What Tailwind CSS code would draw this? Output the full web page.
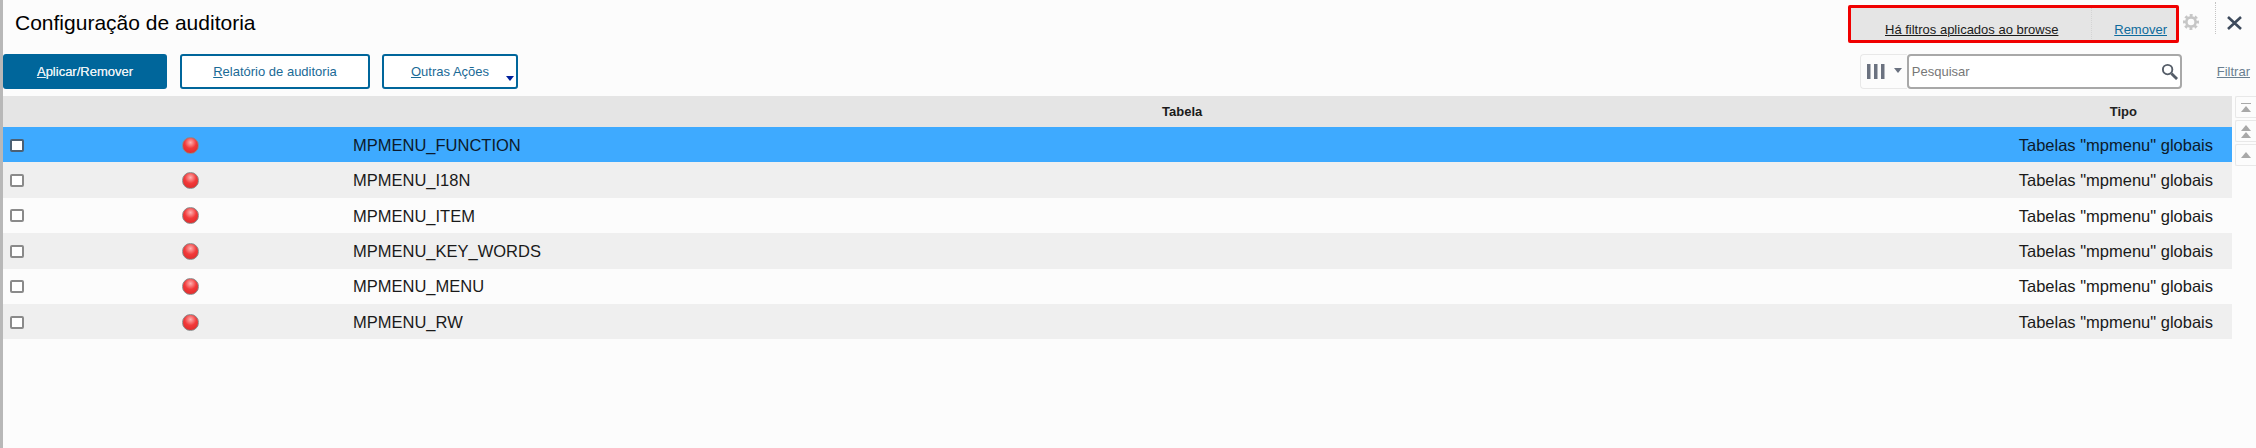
<!DOCTYPE html>
<html>
<head>
<meta charset="utf-8">
<script src="https://cdn.jsdelivr.net/npm/@tailwindcss/browser@4"></script>
</head>
<body class="m-0 overflow-hidden bg-[#fcfcfc]">
<div class="relative flex h-[448px] w-[2256px] font-['Liberation_Sans',Arial,sans-serif] text-[#1a1a1a]">
  <div class="w-[3px] shrink-0 bg-[#b8b8b8]"></div>
  <div class="flex min-w-0 flex-1 flex-col">
    <header class="flex h-[54px] items-start">
      <h1 class="ml-[12px] mt-[8px] text-[21px] leading-[30px] text-black">Configuração de auditoria</h1>
      <div class="ml-auto mt-[5px] flex h-[38px] w-[331px] items-end rounded-[2px] border-[3px] border-[#f00000] bg-[#e5e5e5] pb-[1px] text-[13px] leading-[18px]">
        <a class="ml-[34px] text-[#1a1a1a] underline">Há filtros aplicados ao browse</a>
        <span class="ml-[33px] h-full border-l border-dotted border-[#d4d4d4]"></span>
        <a class="ml-auto mr-[9px] text-[#0d6a9c] underline">Remover</a>
      </div>
      <div class="mt-[14px] flex w-[24px] justify-center">
        <svg width="16" height="16" viewBox="0 0 24 24" fill="none" stroke="#c6c6c6"><circle cx="12" cy="12" r="7" stroke-width="4"/><circle cx="12" cy="12" r="10" stroke-width="4" stroke-dasharray="4.3 3.55" stroke-dashoffset="2.15"/></svg>
      </div>
      <div class="ml-[12px] mt-[2px] h-[32px] border-l border-dotted border-[#c4c4c4]"></div>
      <div class="ml-[11px] mt-[16px] mr-[14px]">
        <svg width="15" height="14" viewBox="0 0 15 14" stroke="#3d4a5c" stroke-width="2.6" fill="none"><path d="M1 1l13 12M14 1L1 13"/></svg>
      </div>
    </header>
    <div class="flex h-[42px] items-start">
      <button class="flex h-[35px] w-[164px] items-center justify-center rounded-[3px] bg-[#00669b] text-[13px] text-[#e8f0f5] [text-shadow:0_0_0.5px_#e8f0f5]"><span><u>A</u>plicar/Remover</span></button>
      <button class="ml-[13px] flex h-[35px] w-[190px] items-center justify-center rounded-[3px] border-2 border-[#00669b] bg-white text-[13px] text-[#1a6a96]"><span><u>R</u>elatório de auditoria</span></button>
      <button class="relative ml-[12px] flex h-[35px] w-[136px] items-center justify-center rounded-[3px] border-2 border-[#00669b] bg-white text-[13px] text-[#1a6a96]"><span><u>O</u>utras Ações</span><span class="absolute bottom-[6px] right-[2px] h-0 w-0 border-x-[4px] border-t-[5px] border-x-transparent border-t-[#00209c]"></span></button>
      <div class="ml-auto flex">
        <div class="flex h-[35px] w-[47px] items-center rounded-l-[4px] border border-r-0 border-[#e8e8e8] pl-[6px]">
          <svg width="18" height="15" viewBox="0 0 18 15" fill="#6b7280"><rect x="0" y="0" width="3.5" height="15"/><rect x="7" y="0" width="3.5" height="15"/><rect x="14" y="0" width="3.5" height="15"/></svg>
          <span class="mb-[3px] ml-[9px] h-0 w-0 border-x-[4px] border-t-[5px] border-x-transparent border-t-[#6b7280]"></span>
        </div>
        <div class="flex h-[35px] w-[275px] items-center rounded-[4px] border-2 border-[#a8a8a8] bg-white pl-[3px] pr-[2px]">
          <span class="text-[13px] text-[#777]">Pesquisar</span>
          <svg class="ml-auto" width="17" height="17" viewBox="0 0 18 18" fill="none" stroke="#555d68"><circle cx="7" cy="7" r="5" stroke-width="2"/><path d="M11 11l6 6" stroke-width="3"/></svg>
        </div>
        <a class="ml-[35px] mr-[6px] self-center text-[13px] leading-[35px] text-[#6a7f90] underline">Filtrar</a>
      </div>
    </div>
    <div class="flex">
      <div class="min-w-0 flex-1">
        <div class="flex h-[31px] items-center bg-[#e5e5e5] text-[13px] font-bold">
          <span class="ml-[1159px]">Tabela</span>
          <span class="ml-auto mr-[95px] text-[#222]">Tipo</span>
        </div>
        <div class="flex h-[35.4px] items-center bg-[#3eaaff] pt-[1px] text-[16.5px] text-[#0c1a2b]">
          <span class="ml-[7px] h-[13px] w-[14px] rounded-[2px] border-2 border-[#4c6073] bg-white"></span>
          <span class="ml-[158px] h-[17px] w-[17px] rounded-full border border-[#8a8a8a] bg-[radial-gradient(circle_at_50%_30%,#ffb0b0_0%,#f23a3a_45%,#d92626_100%)]"></span>
          <span class="ml-[154px]">MPMENU_FUNCTION</span>
          <span class="ml-auto mr-[19px]">Tabelas "mpmenu" globais</span>
        </div>
        <div class="flex h-[35.4px] items-center bg-[#efefef] pt-[1px] text-[16.5px]">
          <span class="ml-[7px] h-[13px] w-[14px] rounded-[2px] border-2 border-[#8a8a8a] bg-white"></span>
          <span class="ml-[158px] h-[17px] w-[17px] rounded-full border border-[#8a8a8a] bg-[radial-gradient(circle_at_50%_30%,#ffb0b0_0%,#f23a3a_45%,#d92626_100%)]"></span>
          <span class="ml-[154px]">MPMENU_I18N</span>
          <span class="ml-auto mr-[19px]">Tabelas "mpmenu" globais</span>
        </div>
        <div class="flex h-[35.4px] items-center bg-[#fcfcfc] pt-[1px] text-[16.5px]">
          <span class="ml-[7px] h-[13px] w-[14px] rounded-[2px] border-2 border-[#8a8a8a] bg-white"></span>
          <span class="ml-[158px] h-[17px] w-[17px] rounded-full border border-[#8a8a8a] bg-[radial-gradient(circle_at_50%_30%,#ffb0b0_0%,#f23a3a_45%,#d92626_100%)]"></span>
          <span class="ml-[154px]">MPMENU_ITEM</span>
          <span class="ml-auto mr-[19px]">Tabelas "mpmenu" globais</span>
        </div>
        <div class="flex h-[35.4px] items-center bg-[#efefef] pt-[1px] text-[16.5px]">
          <span class="ml-[7px] h-[13px] w-[14px] rounded-[2px] border-2 border-[#8a8a8a] bg-white"></span>
          <span class="ml-[158px] h-[17px] w-[17px] rounded-full border border-[#8a8a8a] bg-[radial-gradient(circle_at_50%_30%,#ffb0b0_0%,#f23a3a_45%,#d92626_100%)]"></span>
          <span class="ml-[154px]">MPMENU_KEY_WORDS</span>
          <span class="ml-auto mr-[19px]">Tabelas "mpmenu" globais</span>
        </div>
        <div class="flex h-[35.4px] items-center bg-[#fcfcfc] pt-[1px] text-[16.5px]">
          <span class="ml-[7px] h-[13px] w-[14px] rounded-[2px] border-2 border-[#8a8a8a] bg-white"></span>
          <span class="ml-[158px] h-[17px] w-[17px] rounded-full border border-[#8a8a8a] bg-[radial-gradient(circle_at_50%_30%,#ffb0b0_0%,#f23a3a_45%,#d92626_100%)]"></span>
          <span class="ml-[154px]">MPMENU_MENU</span>
          <span class="ml-auto mr-[19px]">Tabelas "mpmenu" globais</span>
        </div>
        <div class="flex h-[35.4px] items-center bg-[#efefef] pt-[1px] text-[16.5px]">
          <span class="ml-[7px] h-[13px] w-[14px] rounded-[2px] border-2 border-[#8a8a8a] bg-white"></span>
          <span class="ml-[158px] h-[17px] w-[17px] rounded-full border border-[#8a8a8a] bg-[radial-gradient(circle_at_50%_30%,#ffb0b0_0%,#f23a3a_45%,#d92626_100%)]"></span>
          <span class="ml-[154px]">MPMENU_RW</span>
          <span class="ml-auto mr-[19px]">Tabelas "mpmenu" globais</span>
        </div>
      </div>
      <div class="ml-[3px] flex w-[21px] shrink-0 flex-col gap-[2px]">
        <div class="flex h-[22px] flex-col items-center justify-center gap-[2px] rounded-l-[2px] border border-r-0 border-[#e8e8e8]">
          <span class="h-[1px] w-[10px] bg-[#a8a8a8]"></span>
          <span class="h-0 w-0 border-x-[5px] border-b-[6px] border-x-transparent border-b-[#a8a8a8]"></span>
        </div>
        <div class="flex h-[22px] flex-col items-center justify-center rounded-l-[2px] border border-r-0 border-[#e8e8e8]">
          <span class="h-0 w-0 border-x-[5px] border-b-[6px] border-x-transparent border-b-[#a8a8a8]"></span>
          <span class="mt-[1px] h-0 w-0 border-x-[5px] border-b-[6px] border-x-transparent border-b-[#a8a8a8]"></span>
        </div>
        <div class="flex h-[22px] items-center justify-center rounded-l-[2px] border border-r-0 border-[#e8e8e8]">
          <span class="h-0 w-0 border-x-[5px] border-b-[6px] border-x-transparent border-b-[#a8a8a8]"></span>
        </div>
      </div>
    </div>
  </div>
</div>
</body>
</html>
